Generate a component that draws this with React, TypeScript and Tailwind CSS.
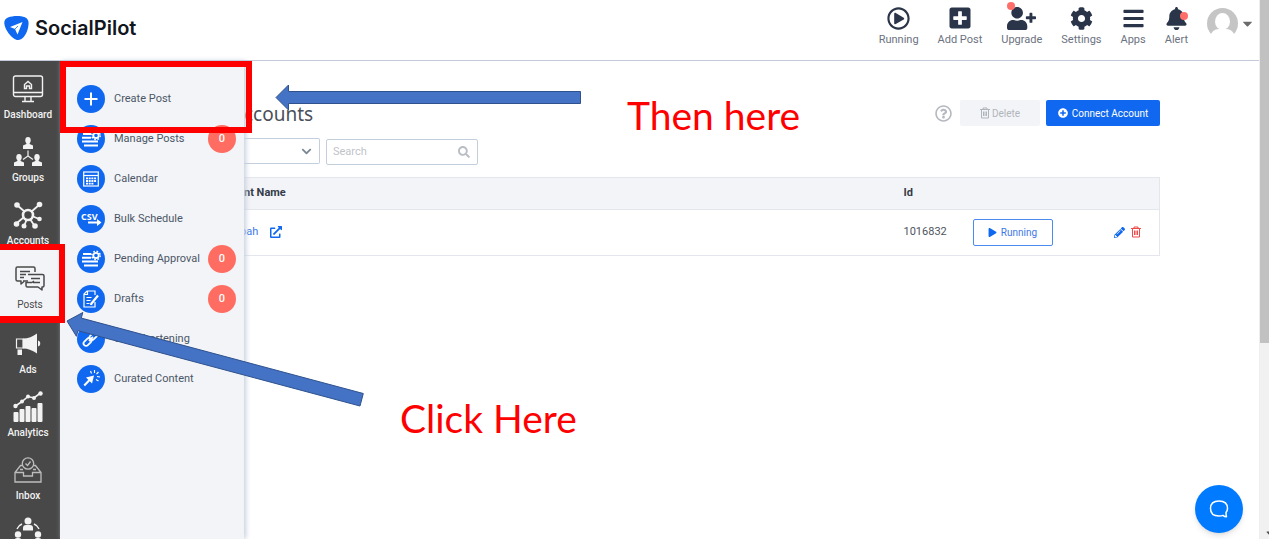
import type { ReactNode } from "react";
import {
    FaBars,
    FaBell,
    FaCaretDown,
    FaChevronDown,
    FaCog,
    FaExternalLinkAlt,
    FaPencilAlt,
    FaPlay,
    FaPlusCircle,
    FaPlusSquare,
    FaRegPlayCircle,
    FaRegQuestionCircle,
    FaSearch,
    FaUserPlus,
} from "react-icons/fa";

interface NavItem {
    label: string;
    icon: ReactNode;
    active?: boolean;
}

interface MenuItem {
    label: string;
    icon: ReactNode;
    count?: number;
}

function DashboardIcon() {
    return (
        <svg width="32" height="28" viewBox="0 0 32 28" fill="none" stroke="currentColor" strokeWidth="1.4">
            <rect x="1.5" y="1" width="29" height="20.5" rx="2" />
            <path d="M1.5 17.5h29M13 21.5v4.5M19 21.5v4.5M10 26.5h12" />
            <path d="M12.5 13.5V9.5L16 6.5l3.5 3v4h-2v-2.5h-3v2.5z" />
        </svg>
    );
}

function Person({ x, y }: { x: number; y: number }) {
    return (
        <g transform={`translate(${x} ${y})`}>
            <ellipse cx="5" cy="3.2" rx="2.7" ry="3.2" />
            <path d="M3.4 5h3.2v2L10 8.6V12H0V8.6L3.4 7z" />
        </g>
    );
}

function GroupsIcon() {
    return (
        <svg width="28" height="29" viewBox="0 0 28 29" fill="currentColor">
            <Person x={9} y={0} />
            <Person x={0} y={17} />
            <Person x={18} y={17} />
            <path d="M14 13.5v5.5l-5 3.5M14 19l5 3.5" fill="none" stroke="currentColor" strokeWidth="1.2" />
        </svg>
    );
}

function AccountsIcon() {
    return (
        <svg width="30" height="28" viewBox="0 0 30 28" fill="currentColor">
            <path
                d="M12 11L4 4M18 11l8-7M11 16l-7 6M14 18l-3 7M17 18l4 6M19 15l7 3"
                stroke="currentColor"
                strokeWidth="1.8"
            />
            <circle cx="15" cy="14" r="5" fill="none" stroke="currentColor" strokeWidth="2.6" />
            <circle cx="4" cy="4" r="2.8" />
            <circle cx="26.5" cy="3.5" r="2.8" />
            <circle cx="3.5" cy="23" r="2.8" />
            <circle cx="11" cy="25" r="2.5" />
            <circle cx="22" cy="25" r="2.8" />
            <circle cx="26.5" cy="18" r="2.3" />
        </svg>
    );
}

function PostsIcon() {
    return (
        <svg width="30" height="25" viewBox="0 0 30 25" fill="none" stroke="currentColor" strokeWidth="1.5" strokeLinejoin="round">
            <path d="M9 15.5L6 18v-3H2.5A1.5 1.5 0 0 1 1 13.5v-11A1.500 1.500 0 0 1 2.500 1h16A1.500 1.500 0 0 1 20 2.500V6" />
            <path d="M13 8.500h14.500A1.500 1.500 0 0 1 29 10v9.500a1.500 1.500 0 0 1-1.500 1.500H27v3l-4-3H12.500a1.500 1.500 0 0 1-1.500-1.500v-3h6l2-1.500" />
            <path d="M5 5.500h10M5 8.500h6M5 11.500h4M16 12.500h9M18 16.500h7M8 15h5" />
        </svg>
    );
}

function AdsIcon() {
    return (
        <svg width="26" height="22" viewBox="0 0 26 22" fill="currentColor">
            <path d="M1.500 6H8v9H1.500z" fill="none" stroke="currentColor" strokeWidth="1.200" />
            <path d="M8 5.500c5 0 10-2 14-5v20c-4-3-9-5-14-5z" />
            <path d="M2.500 16.500H7V22H2.500zM23 7.500c3 .5 3 5.500 0 6z" />
        </svg>
    );
}

function AnalyticsIcon() {
    return (
        <svg width="30" height="31" viewBox="0 0 30 31" fill="currentColor">
            <path d="M2.500 15L9 10.500l6-5 6 1.500 6.500-5" fill="none" stroke="currentColor" strokeWidth="1.600" />
            <circle cx="2.500" cy="15" r="2.200" />
            <circle cx="9" cy="10.500" r="2" />
            <circle cx="15" cy="5.500" r="2" />
            <circle cx="21" cy="7" r="2" />
            <circle cx="27.500" cy="2.500" r="2.200" />
            <rect x="0.500" y="21" width="5" height="10" rx="1" />
            <rect x="6.500" y="18" width="5" height="13" rx="1" />
            <rect x="12.500" y="15" width="5" height="16" rx="1" />
            <rect x="18.500" y="17" width="5" height="14" rx="1" />
            <rect x="24.500" y="12" width="5" height="19" rx="1" />
        </svg>
    );
}

function InboxIcon() {
    return (
        <svg width="28" height="26" viewBox="0 0 28 26" fill="none" stroke="#bdbdbd" strokeWidth="1.300">
            <circle cx="14" cy="6.500" r="5.700" />
            <path d="M11.500 6.500l2 2 3-4" />
            <path d="M8.500 8.500H6.500L1 15.500V25h26v-9.500L21.500 8.500h-2M1 15.500h8.500v3.500h9v-3.500H27M6 12.500h3M19 12.500h3" />
        </svg>
    );
}

function TeamIcon() {
    return (
        <svg width="28" height="26" viewBox="0 0 28 26" fill="currentColor">
            <circle cx="14" cy="4" r="3.500" />
            <path d="M9 13.500V11a3 3 0 0 1 3-3h4a3 3 0 0 1 3 3v2.500z" />
            <circle cx="4" cy="17.500" r="3.200" />
            <circle cx="24" cy="17.500" r="3.200" />
            <path d="M0 26c0-4 1-5 4-5s4 1 4 5zM20 26c0-4 1-5 4-5s4 1 4 5z" />
            <path d="M3 12c1-2.500 2.500-4 5-5M25 12c-1-2.500-2.500-4-5-5" fill="none" stroke="currentColor" strokeWidth="1.400" />
        </svg>
    );
}

function ListGearIcon() {
    return (
        <svg width="20" height="18" viewBox="0 0 20 18" fill="none" stroke="currentColor">
            <path d="M2 4h8M1 7.800h9M1 11.600h16M3 15.400h14" strokeWidth="2" />
            <circle cx="15" cy="5.500" r="2.700" strokeWidth="1.800" />
            <circle cx="15" cy="5.500" r="4.200" strokeWidth="1.500" strokeDasharray="1.650 1.650" />
        </svg>
    );
}

function CalendarIcon() {
    return (
        <svg width="16" height="16" viewBox="0 0 16 16" fill="none" stroke="currentColor">
            <rect x="0.700" y="1" width="14.600" height="14" strokeWidth="1.200" />
            <path d="M1 4.500h14" strokeWidth="1.200" />
            <path d="M3 7.300h10.500M3 10h10.500M3 12.700h8" strokeWidth="1.800" strokeDasharray="2 0.700" />
        </svg>
    );
}

function CsvIcon() {
    return (
        <svg width="22" height="16" viewBox="0 0 22 16">
            <text x="1" y="9" fill="currentColor" className="font-['Open_Sans',sans-serif] text-[9px] font-bold">
                CSV
            </text>
            <path d="M8 10.500h9V8l4.500 3.500L17 15v-2.500H8z" fill="currentColor" />
        </svg>
    );
}

function DraftIcon() {
    return (
        <svg width="18" height="18" viewBox="0 0 18 18" fill="none" stroke="currentColor" strokeWidth="1.200">
            <path d="M13 12v5H2V4l3-3h8v4M2 4.500h3.500V1" />
            <path d="M4.500 7.500h5M4.500 10.500h4M4.500 13.500h3" />
            <path d="M9.500 13.500l6.500-8M9 15l.5-2" strokeWidth="2.200" />
        </svg>
    );
}

function LinkIcon() {
    return (
        <svg width="18" height="18" viewBox="0 0 18 18" fill="none" stroke="currentColor" strokeWidth="1.800">
            <rect x="1" y="9.500" width="9" height="5" rx="2.500" transform="rotate(-45 5.500 12)" />
            <rect x="7" y="3.500" width="9" height="5" rx="2.500" transform="rotate(-45 11.500 6)" />
            <path d="M7 11l4-4" />
        </svg>
    );
}

function CuratedIcon() {
    return (
        <svg width="18" height="18" viewBox="0 0 18 18" fill="currentColor">
            <path d="M4 7.500l8-2-2 8-2.200-2.200L3 16.200 1.500 14.700l4.800-4.900z" />
            <path d="M8.500 1l1 2.500M12.500 0v3M16.500 2L14.500 4M18 7l-3-.5M16.500 11L14 9.500" stroke="currentColor" strokeWidth="1.100" />
        </svg>
    );
}

function PlusIcon() {
    return (
        <svg width="14" height="14" viewBox="0 0 14 14" stroke="currentColor" strokeWidth="2">
            <path d="M7 0.500v13M0.500 7h13" />
        </svg>
    );
}

function TrashIcon() {
    return (
        <svg width="10" height="12" viewBox="0 0 10 12" fill="none" stroke="currentColor" strokeWidth="1">
            <path d="M0 2.500h10M3 2.500V1h4v1.500M1.500 2.500v8.500h7V2.500M3.500 4.500V9M5 4.500V9M6.500 4.500V9" />
        </svg>
    );
}

const navItems: NavItem[] = [
    { label: "Dashboard", icon: <DashboardIcon /> },
    { label: "Groups", icon: <GroupsIcon /> },
    { label: "Accounts", icon: <AccountsIcon /> },
    { label: "Posts", icon: <PostsIcon />, active: true },
    { label: "Ads", icon: <AdsIcon /> },
    { label: "Analytics", icon: <AnalyticsIcon /> },
    { label: "Inbox", icon: <InboxIcon /> },
];

const menuItems: MenuItem[] = [
    { label: "Create Post", icon: <PlusIcon /> },
    { label: "Manage Posts", icon: <ListGearIcon />, count: 0 },
    { label: "Calendar", icon: <CalendarIcon /> },
    { label: "Bulk Schedule", icon: <CsvIcon /> },
    { label: "Pending Approval", icon: <ListGearIcon />, count: 0 },
    { label: "Drafts", icon: <DraftIcon />, count: 0 },
    { label: "URL Shortening", icon: <LinkIcon /> },
    { label: "Curated Content", icon: <CuratedIcon /> },
];

const topItems = [
    { label: "Running", icon: <FaRegPlayCircle size={23} /> },
    { label: "Add Post", icon: <FaPlusSquare size={24} /> },
    { label: "Upgrade", icon: <FaUserPlus size={29} />, dot: "left-0 -top-1" },
    { label: "Settings", icon: <FaCog size={23} /> },
    { label: "Apps", icon: <FaBars size={23} /> },
    { label: "Alert", icon: <FaBell size={23} />, dot: "right-0 top-1.5" },
];

function Header() {
    return (
        <header className="flex h-[61px] shrink-0 items-start justify-between border-b border-[#c3cad9] pr-1">
            <a href="#" className="flex items-center gap-1.5 pl-1 pt-3.5">
                <svg width="25" height="26" viewBox="0 0 25 26">
                    <path
                        d="M4 2.500C9 .5 16 .5 21 2.200c3 1.300 4 4.300 3.500 7.300C24 16 21 22 17 24.300c-2.500 1.300-5 1-7.500-1C4.500 19.500 1 13.500.3 8.500 0 5.500 1.500 3.500 4 2.500z"
                        fill="#1068f0"
                    />
                    <path d="M18.500 7L6 12l5 2 2.500 5.500z" fill="#fff" />
                    <path d="M11 14l3-3" stroke="#1068f0" strokeWidth="0.800" />
                </svg>
                <span className="font-['Inter',sans-serif] text-xl font-semibold text-[#12161c]">SocialPilot</span>
            </a>
            <nav className="flex items-start gap-[19px] pt-1.5">
                {topItems.map((item) => (
                    <button key={item.label} className="flex flex-col items-center gap-1 text-[#2b3549]">
                        <span className="relative flex h-6 items-center">
                            {item.icon}
                            {item.dot && <span className={`absolute size-2 rounded-full bg-[#ff6f69] ${item.dot}`} />}
                        </span>
                        <span className="text-[11px] leading-3 text-[#6b7280]">{item.label}</span>
                    </button>
                ))}
                <button aria-label="Profile" className="flex items-center gap-0.5 pt-0.5 text-[#6b6b6b]">
                    <svg width="31" height="31" viewBox="0 0 31 31">
                        <circle cx="15.500" cy="15.500" r="15.500" fill="#c5c5c5" />
                        <ellipse cx="15.500" cy="13.500" rx="7.500" ry="8.500" fill="#fff" />
                        <path d="M4 26c2-4 5-5 9-5h5c4 0 7 1 9 5l1 5H3z" fill="#fff" />
                    </svg>
                    <FaCaretDown size={15} />
                </button>
            </nav>
        </header>
    );
}

function Sidebar() {
    return (
        <nav className="flex w-[60px] shrink-0 flex-col overflow-hidden bg-[#484848]">
            {navItems.map((item) => (
                <a
                    key={item.label}
                    href="#"
                    className={
                        item.active
                            ? "flex h-[66px] shrink-0 flex-col items-center bg-[#f3f4f7] pb-1 text-[#4a4a4a]"
                            : "flex h-[63px] shrink-0 flex-col items-center pb-0.5 pr-1 text-[#f2f2f2]"
                    }
                >
                    <span className="flex grow items-center pt-2">{item.icon}</span>
                    <span className={item.active ? "text-[10px] leading-3.5" : "text-[10px] font-medium leading-3.5"}>
                        {item.label}
                    </span>
                </a>
            ))}
            <a href="#" aria-label="Team" className="flex shrink-0 justify-center pr-1 pt-3 text-[#f2f2f2]">
                <TeamIcon />
            </a>
        </nav>
    );
}

function PostsMenu() {
    return (
        <nav className="z-10 w-[184px] shrink-0 bg-[#f3f4f7] pt-[18px] shadow-[2px_0_5px_#c8d0de]">
            {menuItems.map((item) => (
                <a key={item.label} href="#" className="flex h-10 items-center pl-[17px] pr-2 text-[11px] text-[#4b5768]">
                    <span className="flex size-7 shrink-0 items-center justify-center rounded-full bg-[#1068f0] text-white">
                        {item.icon}
                    </span>
                    <span className="grow whitespace-nowrap pl-[9px] pt-px">{item.label}</span>
                    {item.count !== undefined && (
                        <span className="flex size-7 shrink-0 items-center justify-center rounded-full bg-[#ff6d62] font-medium text-white">
                            {item.count}
                        </span>
                    )}
                </a>
            ))}
        </nav>
    );
}

function AccountsTable() {
    return (
        <table className="mt-3 w-full table-fixed border border-l-0 border-[#e3e6ec] text-left text-[11px]">
            <thead>
                <tr className="h-8 border-b border-[#e3e6ec] bg-[#f3f4f7] text-[#343b48]">
                    <th className="pt-px font-bold">nt Name</th>
                    <th className="w-[69px] pt-px font-bold">Id</th>
                    <th className="w-[141px]" aria-label="Status" />
                    <th className="w-[46px]" aria-label="Actions" />
                </tr>
            </thead>
            <tbody>
                <tr className="h-[46px]">
                    <td>
                        <a href="#" className="-ml-1 flex items-center gap-3 text-[#3b78e7]">
                            oah
                            <FaExternalLinkAlt size={12} className="text-[#1068f0]" />
                        </a>
                    </td>
                    <td className="text-[11px] text-[#4f5560]">1016832</td>
                    <td>
                        <button className="flex h-[27px] w-20 items-center justify-center gap-1 rounded-xs border border-[#4c8af2] text-[10px] text-[#3b78e7]">
                            <FaPlay size={9} className="text-[#1068f0]" />
                            Running
                        </button>
                    </td>
                    <td>
                        <span className="flex items-center gap-1.5">
                            <button aria-label="Edit" className="text-[#1068f0]">
                                <FaPencilAlt size={11} />
                            </button>
                            <button aria-label="Delete account" className="text-[#f04a4a]">
                                <TrashIcon />
                            </button>
                        </span>
                    </td>
                </tr>
            </tbody>
        </table>
    );
}

function Accounts() {
    return (
        <main className="min-w-0 grow pr-[99px] pt-[39px]">
            <div className="flex h-[26px] items-center justify-between">
                <h1 className="pt-0.5 font-['Noto_Sans',sans-serif] text-[19px] leading-6 text-[#4a4f5a]">ccounts</h1>
                <div className="flex items-center gap-1.5 text-[10px]">
                    <button aria-label="Help" className="mr-0.5 text-[#b4b8bf]">
                        <FaRegQuestionCircle size={17} />
                    </button>
                    <button disabled className="flex h-[26px] w-20 items-center justify-center gap-0.5 rounded-xs bg-[#f3f4f7] text-[#b0b4bb]">
                        <TrashIcon />
                        Delete
                    </button>
                    <button className="flex h-[26px] w-[114px] items-center justify-center gap-1 rounded-xs bg-[#1068f0] text-white">
                        <FaPlusCircle size={10} />
                        Connect Account
                    </button>
                </div>
            </div>
            <div className="mt-3 flex gap-1.5">
                <div className="relative">
                    <select
                        aria-label="Account type"
                        className="h-[26px] w-[76px] appearance-none rounded-r-xs border border-l-0 border-[#c3cfdd] bg-white"
                    />
                    <FaChevronDown size={11} className="pointer-events-none absolute right-2 top-2 text-[#7c8796]" />
                </div>
                <div className="relative">
                    <input
                        type="search"
                        aria-label="Search"
                        placeholder="Search"
                        className="h-[26px] w-[152px] rounded-xs border border-[#c3cfdd] px-1.5 text-[11px] placeholder:text-[#bfc3c9]"
                    />
                    <FaSearch size={12} className="pointer-events-none absolute right-2 top-2 text-[#b9bdc4]" />
                </div>
            </div>
            <AccountsTable />
        </main>
    );
}

// Tutorial marks drawn over the page
function Annotations() {
    return (
        <div className="pointer-events-none absolute inset-0 z-30 overflow-hidden font-['Lato',sans-serif] text-[39px] leading-10 text-[#fe0000]">
            <div className="absolute left-[60px] top-[61px] h-[72px] w-48 border-6 border-[#fe0000]" />
            <div className="absolute left-0 top-[244px] h-[79px] w-[65px] border-6 border-l-0 border-b-7 border-[#fe0000]" />
            <svg className="absolute left-0 top-0" width="600" height="420" fill="#4472c4" stroke="#2f528f">
                <path d="M276 97.500L288.500 85v6.500h292v12h-292v6.500z" />
                <path d="M67 321l15.800-8.500-1.500 5.600L363.300 393.500l-3.300 12.500L77.900 330.700l-1.500 5.600z" />
            </svg>
            <p className="absolute left-[627px] top-[95px] whitespace-nowrap">Then here</p>
            <p className="absolute left-[400px] top-[398px] whitespace-nowrap">Click Here</p>
        </div>
    );
}

export default function App() {
    return (
        <div className="relative flex h-screen overflow-hidden bg-white font-['Roboto',sans-serif]">
            <div className="flex min-w-0 grow flex-col">
                <Header />
                <div className="flex min-h-0 grow">
                    <Sidebar />
                    <PostsMenu />
                    <Accounts />
                </div>
            </div>
            <div className="flex w-[10px] shrink-0 flex-col justify-between overflow-hidden border-l border-[#eeeeee] bg-[#f1f1f1]">
                <div className="h-[343px] bg-[#c1c1c1]" />
                <FaCaretDown size={12} className="ml-1 shrink-0 text-[#505050]" />
            </div>
            <button
                aria-label="Chat"
                className="absolute bottom-1.5 right-[26px] z-20 flex size-12 items-center justify-center rounded-full bg-[#007bff] shadow-md"
            >
                <svg width="20" height="18" viewBox="0 0 20 18" fill="none" stroke="#fff" strokeWidth="1.500">
                    <path
                        d="M17 12.500c1-1.200 1.500-2.500 1.500-4C18.500 4 15.700 1 10 1S1.500 4 1.500 8.500 4.300 16 10 16c1.500 0 3-.2 4-.6.8.8 1.800 1.400 3.500 1.400-.4-1.300-.5-2.800-.5-4.300z"
                        strokeLinejoin="round"
                    />
                </svg>
            </button>
            <Annotations />
        </div>
    );
}
